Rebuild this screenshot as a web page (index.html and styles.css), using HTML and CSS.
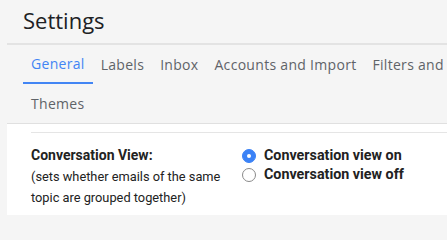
FILE: index.html
```html
<!DOCTYPE html>
<html>
<head>
<meta charset="utf-8">
<link rel="stylesheet" href="styles.css">
</head>
<body>
<div class="header">Settings</div>
<div class="main">
  <nav class="tabs">
    <div class="tabrow">
      <span class="tab active">General</span>
      <span class="tab">Labels</span>
      <span class="tab">Inbox</span>
      <span class="tab">Accounts and Import</span>
      <span class="tab">Filters and Blocked Addresses</span>
    </div>
    <div class="tabrow">
      <span class="tab">Themes</span>
    </div>
  </nav>
  <div class="panel">
    <div class="rule"></div>
    <div class="row">
      <div class="label">
        <div class="title">Conversation View:</div>
        <div class="desc">(sets whether emails of the same<br>topic are grouped together)</div>
      </div>
      <div class="options">
        <label class="opt"><span class="radio on"></span>Conversation view on</label>
        <label class="opt"><span class="radio"></span>Conversation view off</label>
      </div>
    </div>
  </div>
</div>
</body>
</html>
```
FILE: styles.css
```css
html, body {
  margin: 0;
  padding: 0;
  background: #f5f5f5;
  width: 447px;
  height: 215px;
  overflow: hidden;
}
body {
  font-family: Roboto, "Liberation Sans", sans-serif;
  color: #202124;
}
.header {
  height: 43px;
  padding-left: 23px;
  font-family: "Open Sans", Roboto, sans-serif;
  font-size: 22px;
  line-height: 40px;
  color: #202124;
}
.main {
  margin-left: 7px;
  border-top: 2px solid #e3e3e3;
  overflow: hidden;
}
.tabs {
  padding-left: 16px;
  border-bottom: 1px solid #e0e0e0;
}
.tabrow {
  display: flex;
  white-space: nowrap;
}
.tab {
  height: 39px;
  line-height: 40px;
  padding: 0 8px;
  font-family: "Open Sans", Roboto, sans-serif;
  font-size: 14px;
  letter-spacing: 0.3px;
  color: #5f6368;
  white-space: nowrap;
  box-sizing: border-box;
  flex: none;
}
.tab.active {
  color: #4285f4;
  border-bottom: 2px solid #4285f4;
  line-height: 38px;
}
.panel {
  background: #fff;
  padding-left: 24px;
  padding-top: 8px;
  height: 83px;
}
.rule {
  border-top: 1px solid #e5e5e5;
}
.row {
  display: flex;
  padding-top: 12px;
}
.label {
  width: 211px;
}
.title {
  font-weight: bold;
  font-size: 14px;
  line-height: 21px;
  color: #222;
}
.desc {
  font-size: 12.8px;
  line-height: 21px;
  color: #222;
}
.options {
  display: flex;
  flex-direction: column;
  padding-top: 1px;
}
.opt {
  display: flex;
  align-items: center;
  font-weight: bold;
  font-size: 14.3px;
  line-height: 19px;
  color: #222;
}
.radio {
  width: 12px;
  height: 12px;
  border: 1px solid #8a8a8a;
  border-radius: 50%;
  margin-right: 8px;
  box-sizing: content-box;
  background: #fff;
}
.radio.on {
  background: #3b82f6;
  border-color: #3b82f6;
  position: relative;
}
.radio.on::after {
  content: "";
  position: absolute;
  left: 4px;
  top: 4px;
  width: 4px;
  height: 4px;
  border-radius: 50%;
  background: #fff;
}
```
